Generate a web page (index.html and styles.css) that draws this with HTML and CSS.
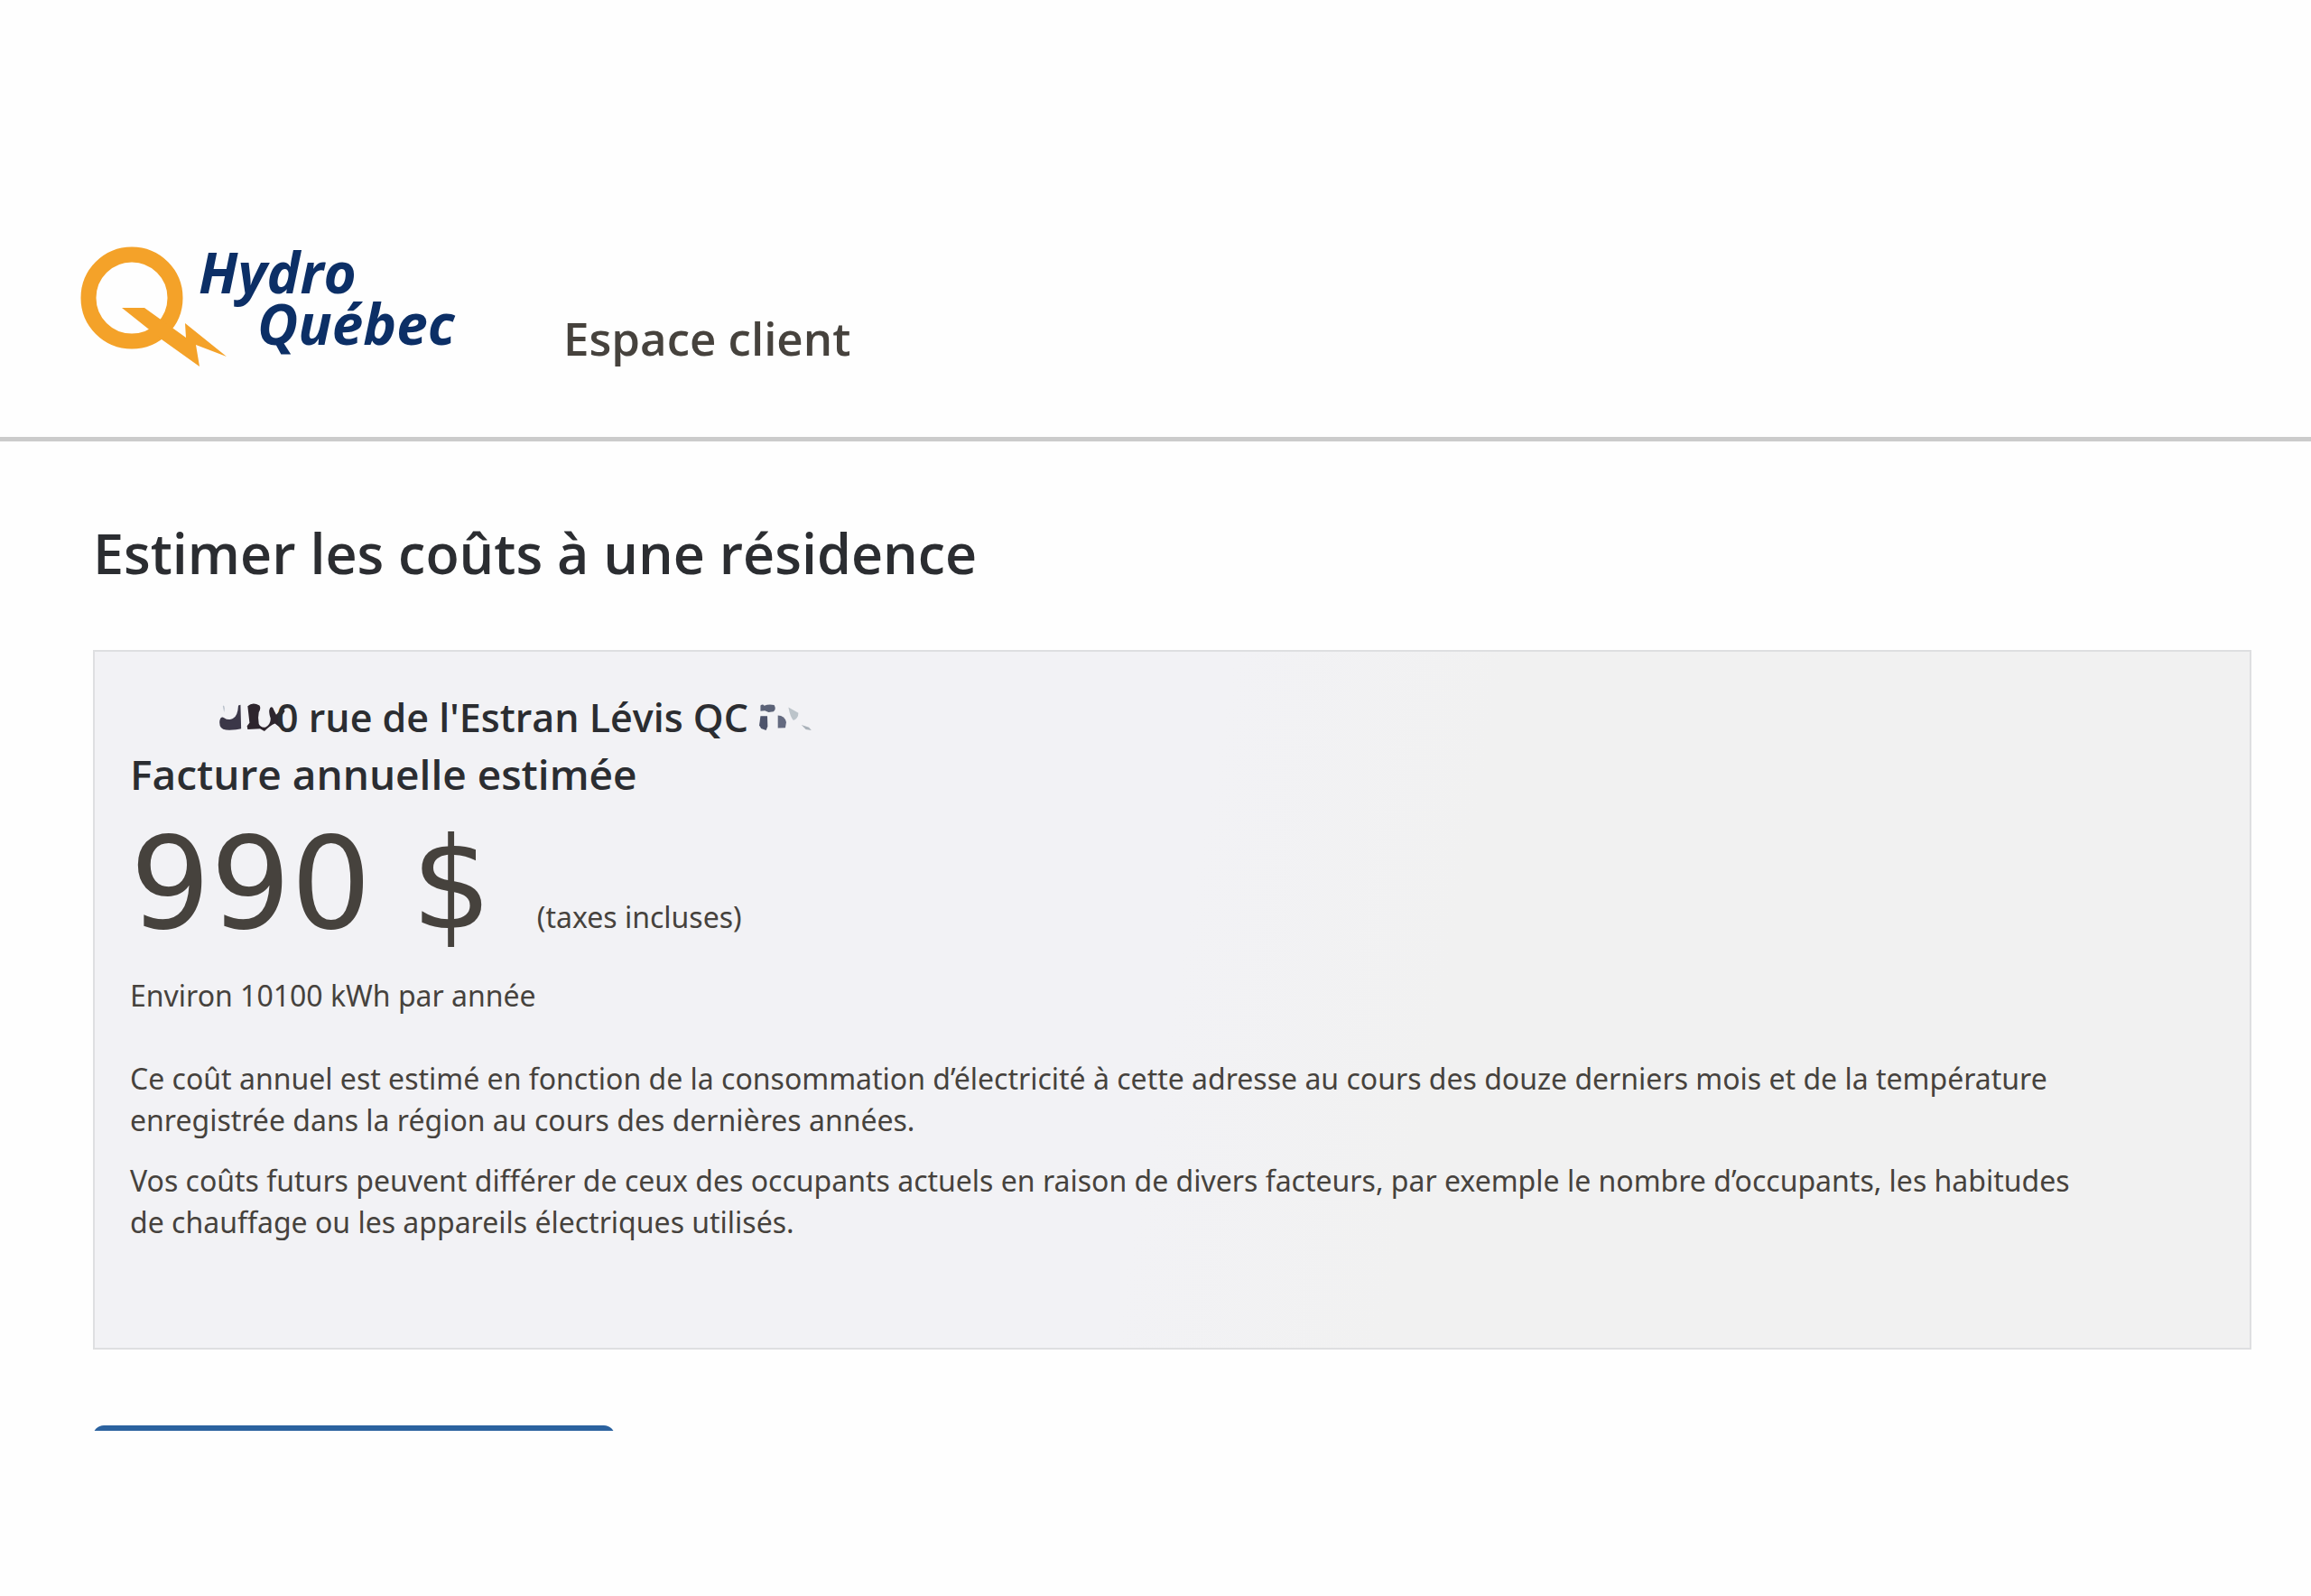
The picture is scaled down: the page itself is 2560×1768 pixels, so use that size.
FILE: index.html
```html
<!DOCTYPE html>
<html lang="fr">
<head>
<meta charset="utf-8">
<meta name="viewport" content="width=device-width, initial-scale=1">
<title>Espace client</title>
<link rel="stylesheet" href="styles.css">
</head>
<body>
<header class="site-header">
  <svg class="logo" viewBox="0 0 420 140" role="img" aria-label="Hydro-Québec">
    <circle cx="58" cy="60" r="48" fill="none" stroke="#f4a229" stroke-width="17"/>
    <path d="M47 71H72L118 104L117 88L163 125L129 112L133 136L91 106Z" fill="#f4a229"/>
    <text class="logo-text" x="132" y="55">Hydro</text>
    <text class="logo-text" x="197" y="112">Québec</text>
  </svg>
  <p class="site-section">Espace client</p>
</header>
<main class="content">
  <h1 class="title">Estimer les coûts à une résidence</h1>
  <section class="card">
    <h2 class="address"><svg class="mark-start" viewBox="66 60 186 96" aria-hidden="true">
        <path d="M70 118Q74 104 84 110Q98 120 112 112Q128 106 130 70L137 68L139 145Q122 150 90 149Q66 146 70 118Z" fill="#3b3748"/>
        <path d="M80 72Q84 66 86 80L84 92Z" fill="#b9c1cb"/>
        <path d="M160 72Q176 58 198 70Q204 78 196 92Q192 110 196 130Q204 144 218 140Q234 130 234 112Q226 90 232 78Q240 70 244 84L252 100L272 78L280 88L264 112L276 140L268 144L248 128Q232 134 214 153L200 145L160 147L158 136L166 126Z" fill="#2e252d"/>
      </svg>0 rue de l'Estran Lévis QC <svg class="mark-end" viewBox="44 60 180 96" aria-hidden="true">
        <path d="M48 70Q56 64 60 71Q76 64 92 69Q100 82 90 90L74 92L62 87L48 88Z" fill="#5b6277"/>
        <path d="M48 104L70 104L71 138L66 150L50 144L44 134Z" fill="#4e546c"/>
        <path d="M104 102Q126 102 131 124L128 142L104 143Z" fill="#646a80"/>
        <path d="M138 76L170 94Q170 112 154 118Q144 108 138 76Z" fill="#bcc4ca"/>
        <path d="M180 133L204 141L212 150L194 147Z" fill="#a9b1b9"/>
      </svg></h2>
    <h3 class="subtitle">Facture annuelle estimée</h3>
    <p class="amount-row"><span class="amount">990 $</span><span class="note">(taxes incluses)</span></p>
    <p class="usage">Environ 10100 kWh par année</p>
    <p class="text">Ce coût annuel est estimé en fonction de la consommation d’électricité à cette adresse au cours des douze derniers mois et de la température enregistrée dans la région au cours des dernières années.</p>
    <p class="text">Vos coûts futurs peuvent différer de ceux des occupants actuels en raison de divers facteurs, par exemple le nombre d’occupants, les habitudes de chauffage ou les appareils électriques utilisés.</p>
  </section>
  <div class="actions">
    <button class="primary" type="button" aria-label="Continuer"></button>
  </div>
</main>
</body>
</html>
```
FILE: styles.css
```css
* {
  box-sizing: border-box;
}

body {
  margin: 0;
  padding-top: 270px;
  background: #fefefe;
  color: #46423d;
  font-family: "Open Sans", sans-serif;
  font-size: 32px;
  line-height: 46px;
}

h1, h2, h3, p {
  margin: 0;
  font-weight: 600;
}

.site-header {
  display: flex;
  align-items: flex-start;
  gap: 116px;
  height: 219px;
  padding-left: 88px;
  border-bottom: 5px solid #cbcbcb;
}

.logo {
  width: 420px;
  height: 140px;
  overflow: visible;
}

.logo-text {
  fill: #0c2f66;
  font-family: "Open Sans", sans-serif;
  font-size: 62px;
  font-style: italic;
  font-weight: 700;
}

.site-section {
  padding-top: 72px;
  font-size: 51px;
  line-height: 64px;
}

.content {
  padding: 84px 66px 0 103px;
}

.title {
  color: #2b2d31;
  font-size: 61px;
  line-height: 80px;
}

.card {
  margin-top: 67px;
  padding: 42px 160px 116px 39px;
  border: 2px solid #dedfe1;
  background: linear-gradient(100deg, #f2f2f5 50%, #f1f1f1 62%);
}

.address,
.subtitle {
  color: #2b2d31;
  font-size: 46px;
  line-height: 62px;
}

.address {
  padding-left: 98px;
  font-size: 43px;
}

.mark-start,
.mark-end {
  width: 64px;
  height: 33px;
  overflow: visible;
}

.amount-row {
  display: flex;
  align-items: baseline;
  gap: 50px;
  margin-bottom: 8px;
}

.note,
.usage,
.text {
  font-family: "Noto Sans", sans-serif;
  font-weight: 400;
}

.amount {
  font-family: "DejaVu Sans", sans-serif;
  font-size: 140px;
  font-weight: 400;
  line-height: 184px;
}

.usage {
  margin-bottom: 46px;
}

.text + .text {
  margin-top: 21px;
}

.actions {
  height: 6px;
  margin-top: 84px;
  overflow: hidden;
}

.primary {
  display: block;
  width: 578px;
  height: 80px;
  border: 0;
  border-radius: 12px;
  background: #2b629f;
}
```
